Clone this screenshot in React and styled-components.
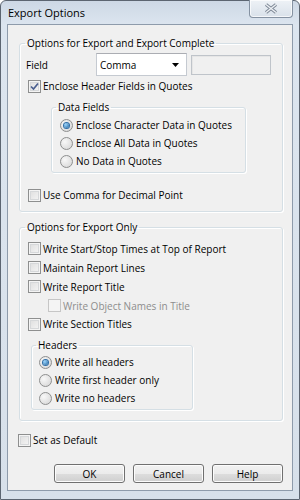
import React from 'react';
import styled, {createGlobalStyle} from 'styled-components';

const GlobalStyle = createGlobalStyle`
  html, body {
    margin: 0;
    padding: 0;
    background: #fff;
  }

  body {
    font-family: "Open Sans", "Liberation Sans", sans-serif;
    font-size: 10px;
    color: #000;
  }

  * {
    box-sizing: border-box;
  }
`

const Window = styled.div`
  width: 300px;
  height: 500px;
  display: flex;
  flex-direction: column;
  border: 1px solid #5c6571;
  border-radius: 6px 6px 0 0;
  background: linear-gradient(#cdd8e5, #dce5ef 24px, #d7e0ea);
  padding: 0 6px 8px 6px;
`

const TitleBar = styled.div`
  height: 23px;
  display: flex;
  align-items: center;
  justify-content: space-between;
  padding-left: 1px;
`

const Title = styled.span`
  font-size: 11px;
  color: #000;
`

const CloseButton = styled.div`
  align-self: flex-start;
  margin-top: -1px;
  width: 44px;
  height: 18px;
  display: flex;
  align-items: center;
  justify-content: center;
  border: 1px solid #8592a2;
  border-top: none;
  border-radius: 0 0 4px 4px;
  background: linear-gradient(#eef2f6, #d9e1ea);
  box-shadow: inset 0 0 0 1px rgba(255, 255, 255, 0.7);
`

const Client = styled.div`
  flex: 1;
  display: flex;
  flex-direction: column;
  border: 1px solid #8e9bab;
  background: #f0f0f0;
  padding: 0 9px 0 11px;
`

const Group = styled.fieldset`
  margin: ${props => props.$top}px 0 0 ${props => props.$left || 0}px;
  width: ${props => props.$width ? props.$width + 'px' : 'auto'};
  padding: ${props => props.$pad};
  border: 1px solid #d5dfe5;
  border-radius: 3px;
  box-shadow: inset 1px 1px 0 #fff, 1px 1px 0 #fff;
  min-width: 0;
`

const Legend = styled.legend`
  margin-left: ${props => props.$shift}px;
  padding: 0 2px;
  font-size: 10px;
  line-height: 15px;
  height: 15px;
`

const FieldRow = styled.div`
  margin-top: 2px;
  height: 23px;
  display: flex;
  align-items: center;
`

const FieldLabel = styled.span`
  width: 70px;
`

const Combo = styled.div`
  width: 91px;
  height: 23px;
  display: flex;
  align-items: center;
  justify-content: space-between;
  padding: 0 7px 0 3px;
  background: #fff;
  border: 1px solid #c5cad1;
  border-top-color: #abadb3;
`

const TextBox = styled.div`
  margin-left: 4px;
  width: 80px;
  height: 20px;
  background: #f0f0f0;
  border: 1px solid #bfc4ca;
  box-shadow: inset 1px 1px 0 #e6e6e6;
`

const Row = styled.label`
  height: ${props => props.$h || 18}px;
  margin-top: ${props => props.$top || 0}px;
  margin-left: ${props => props.$indent || 0}px;
  display: flex;
  align-items: center;
  gap: 2px;
  color: ${props => props.$disabled ? '#8d8d8d' : '#000'};
`

const Box = styled.span`
  width: 13px;
  height: 13px;
  flex: none;
  display: flex;
  align-items: center;
  justify-content: center;
  border: 1px solid ${props => props.$disabled ? '#c6c6c6' : '#8e8f8f'};
  background: ${props => props.$disabled
    ? '#f4f4f4'
    : 'linear-gradient(135deg, #dcdcdc, #f7f7f7)'};
  box-shadow: ${props => props.$disabled
    ? 'none'
    : 'inset 0 0 0 1px #f4f4f4, inset 0 0 0 2px #d6d8da'};
`

const Circle = styled.span`
  width: 13px;
  height: 13px;
  flex: none;
  border-radius: 50%;
  display: flex;
  align-items: center;
  justify-content: center;
  border: 1px solid #8e8f8f;
  background: radial-gradient(circle at 35% 35%, #f8f8f8, #d3d3d3);
  margin-right: 1px;
`

const Dot = styled.span`
  width: 5px;
  height: 5px;
  border-radius: 50%;
  background: radial-gradient(circle at 35% 35%, #9ad6ff, #1d5f99);
  box-shadow: 0 0 0 1px #2f6ea8;
`

const ButtonRow = styled.div`
  margin-top: 15px;
  display: flex;
  justify-content: flex-end;
  gap: 8px;
`

const Button = styled.div`
  width: 71px;
  height: 19px;
  display: flex;
  align-items: center;
  justify-content: center;
  border: 1px solid #707070;
  border-radius: 3px;
  background: linear-gradient(#f2f2f2 0%, #ebebeb 50%, #dddddd 51%, #cfcfcf 100%);
  box-shadow: inset 0 0 0 1px #fcfcfc;
  font-size: 10px;
`

const CheckIcon = () => (
  <svg width="9" height="9" viewBox="0 0 9 9">
    <path d="M1 4.5 L3.5 7 L8 1.5" fill="none" stroke="#4a5f8f" strokeWidth="1.7"/>
  </svg>
)

const Check = ({label, checked, disabled, indent, top, h}) => (
  <Row $indent={indent} $top={top} $h={h} $disabled={disabled}>
    <Box $disabled={disabled}>{checked && <CheckIcon/>}</Box>
    <span>{label}</span>
  </Row>
)

const Radio = ({label, checked}) => (
  <Row>
    <Circle>{checked && <Dot/>}</Circle>
    <span>{label}</span>
  </Row>
)

const App = () => {
  return (
    <>
      <GlobalStyle/>
      <Window>
        <TitleBar>
          <Title>Export Options</Title>
          <CloseButton>
            <svg width="14" height="11" viewBox="0 0 14 11">
              <path d="M2 1.5 L12 9.5 M12 1.5 L2 9.5" stroke="#7d8896" strokeWidth="3.4"/>
              <path d="M2 1.5 L12 9.5 M12 1.5 L2 9.5" stroke="#eef1f5" strokeWidth="1.4"/>
            </svg>
          </CloseButton>
        </TitleBar>
        <Client>
          <Group $top={11} $pad="0 6px 7px 6px">
            <Legend $shift={-1}>Options for Export and Export Complete</Legend>
            <FieldRow>
              <FieldLabel>Field</FieldLabel>
              <Combo>
                <span>Comma</span>
                <svg width="7" height="4" viewBox="0 0 7 4">
                  <path d="M0 0 H7 L3.5 4 Z" fill="#000"/>
                </svg>
              </Combo>
              <TextBox/>
            </FieldRow>
            <Check label="Enclose Header Fields in Quotes" checked indent={2} top={1}/>
            <Group $top={5} $left={25} $width={195} $pad="1px 8px 2px 8px">
              <Legend $shift={-4}>Data Fields</Legend>
              <Radio label="Enclose Character Data in Quotes" checked/>
              <Radio label="Enclose All Data in Quotes"/>
              <Radio label="No Data in Quotes"/>
            </Group>
            <Check label="Use Comma for Decimal Point" indent={2} top={13}/>
          </Group>

          <Group $top={8} $pad="4px 6px 10px 6px">
            <Legend $shift={-1}>Options for Export Only</Legend>
            <Check label="Write Start/Stop Times at Top of Report" indent={2} h={19}/>
            <Check label="Maintain Report Lines" indent={2} h={19}/>
            <Check label="Write Report Title" indent={2} h={19}/>
            <Check label="Write Object Names in Title" indent={22} h={19} disabled/>
            <Check label="Write Section Titles" indent={2} h={18}/>
            <Group $top={5} $left={5} $width={162} $pad="0 7px 2px 7px">
              <Legend $shift={-3}>Headers</Legend>
              <Radio label="Write all headers" checked/>
              <Radio label="Write first header only"/>
              <Radio label="Write no headers"/>
            </Group>
          </Group>

          <Check label="Set as Default" indent={-1} top={10}/>

          <ButtonRow>
            <Button>OK</Button>
            <Button>Cancel</Button>
            <Button>Help</Button>
          </ButtonRow>
        </Client>
      </Window>
    </>
  );
};

export default App;
